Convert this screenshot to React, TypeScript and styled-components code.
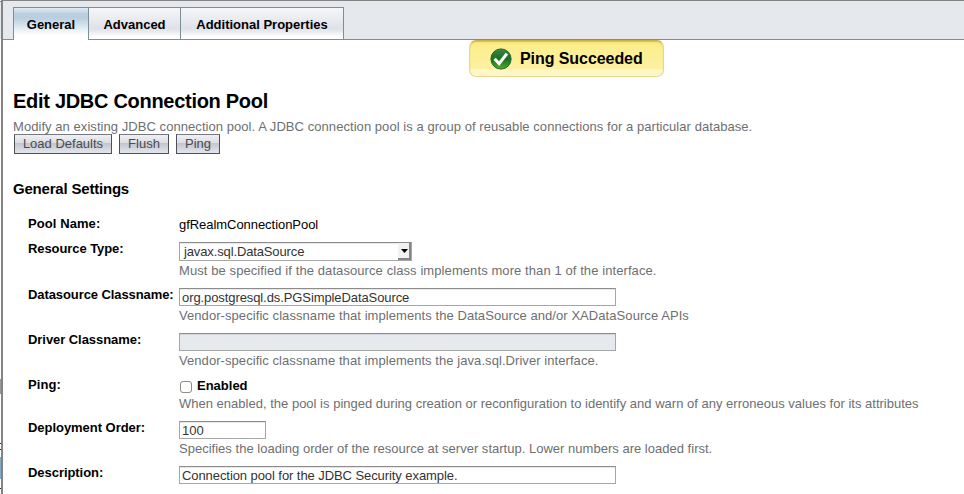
import React from 'react';
import styled, { createGlobalStyle } from 'styled-components';

const GlobalStyle = createGlobalStyle`
  * { box-sizing: border-box; }
  body { margin: 0; background: #fff; overflow: hidden; }
  body, input, button, select { font: 13px/15px "Liberation Sans", Arial, sans-serif; }
`;

const Frame = styled.div`
  display: flex;
  width: 964px;
  height: 494px;
  overflow: hidden;
`;

const Edge = styled.div`
  display: flex;
  flex-direction: column;
  flex: 0 0 3px;
  width: 3px;
  border-right: 2px solid #838383;
`;

const EdgePart = styled.div<{ $h: number; $c: string }>`
  flex: 0 0 ${(p) => p.$h}px;
  background: ${(p) => p.$c};
`;

const Page = styled.main`
  flex: 1;
  min-width: 0;
  border-top: 1px solid #838383;
`;

const TabBar = styled.nav`
  display: flex;
  height: 39px;
  padding: 6px 0 0 10px;
  background: #e5e8ed;
  box-shadow: inset 0 -1px #7b8f99;
`;

const Tab = styled.a<{ $w: number; $active?: boolean }>`
  width: ${(p) => p.$w}px;
  height: ${(p) => (p.$active ? 33 : 32)}px;
  padding-top: 9px;
  border: solid #7b8f99;
  border-width: 1px 1px 0 0;
  text-align: center;
  font-weight: bold;
  color: #000;
  white-space: nowrap;
  background: ${(p) =>
    p.$active
      ? 'linear-gradient(#e3ebf2 0, #b9cedf 6px, #b9cedf 10px, #fff 27px)'
      : 'linear-gradient(#f6f7f9 0, #dfe2e9 20px, #e2e5eb 22px, #fff 29px)'};
  &:first-child { border-left-width: 1px; }
`;

const Alert = styled.div`
  display: flex;
  align-items: center;
  width: 195px;
  height: 37px;
  margin-left: 466px;
  padding-left: 20px;
  gap: 8px;
  border: 1px solid #e6d98f;
  border-top-color: #c9b04b;
  border-radius: 7px;
  background: linear-gradient(#f7e679 0, #fcee8e 5px, #fdf0a1 28px, #fff6c5 28px);
  box-shadow: inset 0 1px 1px #d7be55;
  font-size: 16px;
  line-height: 18px;
  font-weight: bold;
  color: #000;
  white-space: nowrap;
`;

const AlertText = styled.span`
  letter-spacing: -0.07px;
`;

const Title = styled.h1`
  margin: 13px 0 0 10px;
  font-size: 20px;
  line-height: 23px;
  letter-spacing: -0.29px;
`;

const Intro = styled.p`
  margin: 6px 0 0 10px;
  color: #6d6f72;
  letter-spacing: 0.058px;
  white-space: nowrap;
`;

const Buttons = styled.div`
  display: flex;
  gap: 7px;
  margin-left: 11px;
`;

const Button = styled.button<{ $w: number }>`
  width: ${(p) => p.$w}px;
  height: 20px;
  padding: 0 0 1px;
  border: 1px solid #4d4f59;
  border-top-color: #777982;
  border-radius: 0;
  color: #4a4b4e;
  background: linear-gradient(#f0f0f3 0, #dcdde2 8px, #c2c4cd 8px, #e4e6ee 18px);
`;

const Section = styled.h2`
  margin: 26px 0 0 10px;
  font-size: 15px;
  line-height: 17px;
  letter-spacing: -0.2px;
`;

const Form = styled.form`
  padding: 19px 0 0 25px;
`;

const Row = styled.div<{ $h: number }>`
  display: grid;
  grid-template-columns: 151px 1fr;
  height: ${(p) => p.$h}px;
`;

const Label = styled.label<{ $ls?: number }>`
  font-weight: bold;
  color: #000;
  letter-spacing: ${(p) => p.$ls ?? 0}px;
  white-space: nowrap;
`;

const Field = styled.div`
  padding-top: 1px;
  white-space: nowrap;
`;

const Value = styled.span`
  letter-spacing: -0.05px;
`;

const Input = styled.input<{ $w?: number; $ls?: number }>`
  display: block;
  width: ${(p) => p.$w ?? 437}px;
  height: 18px;
  padding: 1px 2px 0;
  border: 1px solid #a6a6a6;
  border-top-color: #8c8c8c;
  border-radius: 0;
  color: #333;
  background: #fff;
  letter-spacing: ${(p) => p.$ls ?? 0}px;
  box-shadow: inset 0 1px #e8e8e8;
  &:disabled { background: #e6e9ee; box-shadow: inset 0 1px #d3d6db; }
`;

const Select = styled.div`
  display: flex;
  justify-content: space-between;
  width: 233px;
  height: 19px;
  padding-left: 4px;
  border: 1px solid #a6a6a6;
  border-top-color: #8c8c8c;
  color: #333;
  line-height: 18px;
  letter-spacing: -0.13px;
  box-shadow: inset 0 1px #e8e8e8;
`;

const Arrow = styled.span`
  display: flex;
  justify-content: center;
  width: 13px;
  height: 17px;
  padding-left: 1px;
  border-right: 2px solid #858585;
  border-bottom: 2px solid #858585;
  background: #f2f2f2;
  svg { margin-top: 6px; }
`;

const Help = styled.div<{ $gap?: number; $ls: number }>`
  margin-top: ${(p) => p.$gap ?? 2}px;
  letter-spacing: ${(p) => p.$ls}px;
  color: #6d6f72;
`;

const CheckLine = styled.label`
  display: flex;
  font-weight: bold;
  gap: 5px;
  padding-left: 1px;
`;

const Checkbox = styled.input`
  appearance: none;
  width: 12px;
  height: 12px;
  margin: 3px 0 0;
  border: 1px solid #8e8a84;
  border-radius: 3px;
  background: #fff;
`;

const edge: [number, string][] = [
  [1, '#fff'], [1, '#838383'], [37, '#e5e8ed'], [340, '#fff'], [15, '#999'], [49, '#fff'],
  [1, '#222'], [5, '#fff'], [1, '#222'], [7, '#fff'], [22, '#7fabc9'], [9, '#fff'], [1, '#222'],
];

export default function App() {
  return (
    <>
      <GlobalStyle />
      <Frame>
        <Edge>{edge.map(([h, c], i) => <EdgePart key={i} $h={h} $c={c} />)}</Edge>
        <Page>
          <TabBar>
            <Tab $w={76} $active>General</Tab>
            <Tab $w={92}>Advanced</Tab>
            <Tab $w={163}>Additional Properties</Tab>
          </TabBar>
          <Alert>
            <svg width="22" height="22" viewBox="0 0 22 22">
              <defs>
                <linearGradient id="ok" x2="0" y2="1">
                  <stop offset="0" stopColor="#3e8444" />
                  <stop offset=".5" stopColor="#187020" />
                  <stop offset="1" stopColor="#50ad29" />
                </linearGradient>
              </defs>
              <circle cx="11" cy="11" r="10.1" fill="url(#ok)" stroke="#29642d" />
              <path d="M4.6 10.8 9.1 15.6 16.9 5.6" fill="none" stroke="#fff" strokeWidth="3.1" />
            </svg>
            <AlertText>Ping Succeeded</AlertText>
          </Alert>
          <Title>Edit JDBC Connection Pool</Title>
          <Intro>
            Modify an existing JDBC connection pool. A JDBC connection pool is a group of reusable connections for a particular database.
          </Intro>
          <Buttons>
            <Button $w={98}>Load Defaults</Button>
            <Button $w={50}>Flush</Button>
            <Button $w={44}>Ping</Button>
          </Buttons>
          <Section>General Settings</Section>
          <Form>
            <Row $h={25}>
              <Label $ls={0.08}>Pool Name:</Label>
              <Field><Value>gfRealmConnectionPool</Value></Field>
            </Row>
            <Row $h={46}>
              <Label $ls={-0.08}>Resource Type:</Label>
              <Field>
                <Select>
                  javax.sql.DataSource
                  <Arrow><svg width="7" height="4"><path d="M0 0h7L3.5 4z" fill="#000" /></svg></Arrow>
                </Select>
                <Help $ls={0.087}>Must be specified if the datasource class implements more than 1 of the interface.</Help>
              </Field>
            </Row>
            <Row $h={45}>
              <Label $ls={-0.09}>Datasource Classname:</Label>
              <Field>
                <Input $ls={-0.09} defaultValue="org.postgresql.ds.PGSimpleDataSource" />
                <Help $ls={0.068}>Vendor-specific classname that implements the DataSource and/or XADataSource APIs</Help>
              </Field>
            </Row>
            <Row $h={45}>
              <Label $ls={-0.06}>Driver Classname:</Label>
              <Field>
                <Input disabled />
                <Help $ls={0.065}>Vendor-specific classname that implements the java.sql.Driver interface.</Help>
              </Field>
            </Row>
            <Row $h={43}>
              <Label $ls={0.1}>Ping:</Label>
              <Field>
                <CheckLine><Checkbox type="checkbox" />Enabled</CheckLine>
                <Help $gap={3} $ls={0.008}>When enabled, the pool is pinged during creation or reconfiguration to identify and warn of any erroneous values for its attributes</Help>
              </Field>
            </Row>
            <Row $h={45}>
              <Label $ls={-0.04}>Deployment Order:</Label>
              <Field>
                <Input $w={87} defaultValue="100" />
                <Help $ls={0.015}>Specifies the loading order of the resource at server startup. Lower numbers are loaded first.</Help>
              </Field>
            </Row>
            <Row $h={28}>
              <Label $ls={-0.05}>Description:</Label>
              <Field>
                <Input $ls={-0.075} defaultValue="Connection pool for the JDBC Security example." />
              </Field>
            </Row>
          </Form>
        </Page>
      </Frame>
    </>
  );
}
